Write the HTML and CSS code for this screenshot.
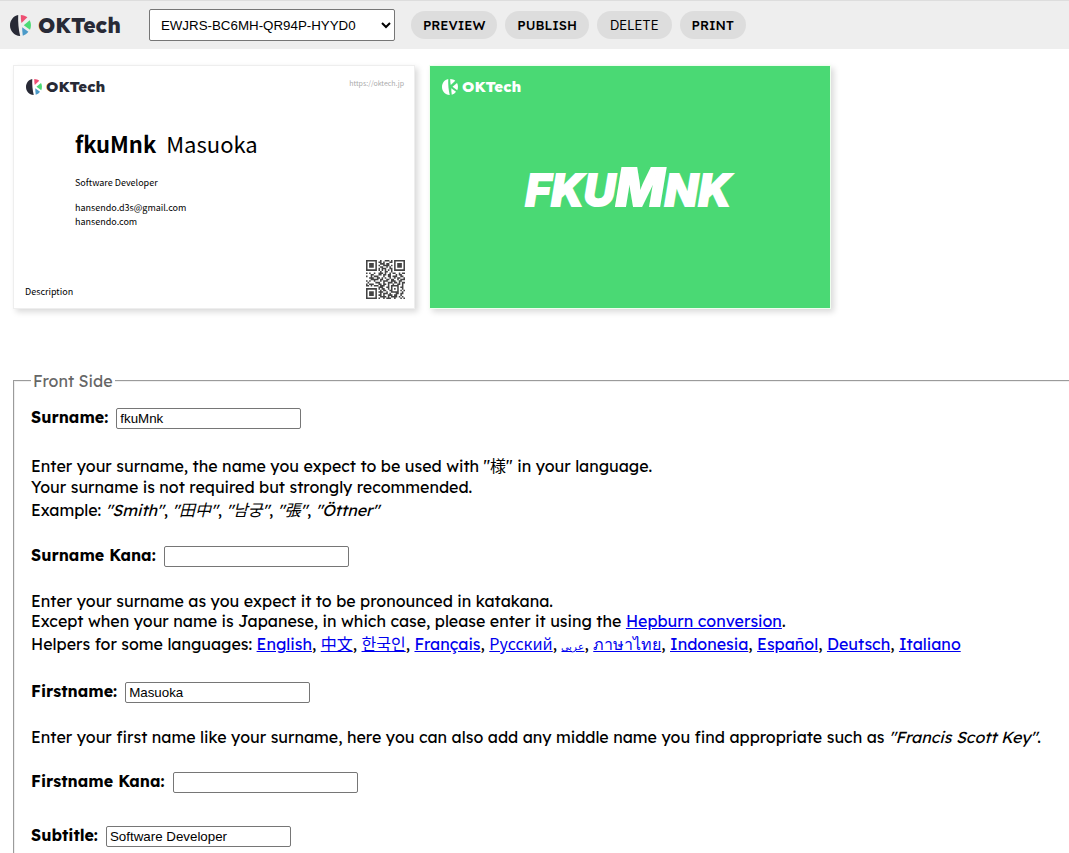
FILE: index.html
```
<!DOCTYPE html>
<html lang="en">
<head>
  <meta charset="UTF-8" />
  <meta name="viewport" content="width=device-width, initial-scale=1.0" />
  <title>OKTech Cards</title>
  <link rel="stylesheet" href="styles.css">
</head>

<body>
<!-- Logo mark, shared by the toolbar and both cards -->
<svg class="sprite" aria-hidden="true">
  <symbol id="mark" viewBox="0 0 64 64">
    <path class="mark-dark" d="M25 0C10 3 0 16 0 32s12 31 31 32C26 44 24 22 25 0z" />
    <path class="mark-pink" d="M33 0c8 0 15 3 20 7L35 24c-2-8-2-16-2-24z" />
    <path class="mark-green" d="M42 31L60 16c5 9 5 20 1 29z" />
    <path class="mark-blue" d="M37 37l19 14c-4 6-11 10-17 12-1-8-2-17-2-26z" />
  </symbol>
</svg>

<header class="toolbar">
  <a class="logo" href="#">
    <svg class="logo-mark" aria-hidden="true"><use href="#mark" /></svg>
    <span>OKTech</span>
  </a>
  <select class="card-select" aria-label="Card">
    <option>EWJRS-BC6MH-QR94P-HYYD0</option>
  </select>
  <div class="actions">
    <button type="button">PREVIEW</button>
    <button type="button">PUBLISH</button>
    <button type="button" class="light">DELETE</button>
    <button type="button">PRINT</button>
  </div>
</header>

<main>
  <!-- Card preview -->
  <section class="cards">
    <article class="card front">
      <div class="card-top">
        <div class="logo small">
          <svg class="logo-mark" aria-hidden="true"><use href="#mark" /></svg>
          <span>OKTech</span>
        </div>
        <span class="card-url">https://oktech.jp</span>
      </div>
      <div class="card-body">
        <h1 class="card-name"><b>fkuMnk</b> <span>Masuoka</span></h1>
        <p class="card-subtitle">Software Developer</p>
        <p>hansendo.d3s@gmail.com<br>hansendo.com</p>
      </div>
      <div class="card-bottom">
        <p>Description</p>
        <svg class="qr" viewBox="0 0 25 25" role="img" aria-label="QR code">
          <path d="M0 .5h7m2 0h1m2 0h3m1 0h1m1 0h7
            M0 1.5h1m5 0h1m1 0h2m1 0h1m3 0h2m1 0h1m5 0h1
            M0 2.5h1m1 0h3m1 0h1m2 0h3m1 0h2m3 0h1m1 0h3m1 0h1
            M0 3.5h1m1 0h3m1 0h1m1 0h1m2 0h4m1 0h1m1 0h1m1 0h3m1 0h1
            M0 4.5h1m1 0h3m1 0h1m2 0h2m2 0h1m1 0h1m2 0h1m1 0h3m1 0h1
            M0 5.5h1m5 0h1m1 0h1m1 0h3m2 0h2m1 0h1m5 0h1
            M0 6.5h7m1 0h1m1 0h1m1 0h1m1 0h1m1 0h1m1 0h7
            M9 7.5h1m2 0h2m2 0h1
            M0 8.5h1m1 0h1m2 0h1m2 0h3m1 0h1m2 0h1m1 0h2m2 0h1m1 0h2
            M3 9.5h2m3 0h2m1 0h2m1 0h2m3 0h1m1 0h2
            M0 10.5h1m2 0h1m1 0h3m3 0h1m2 0h2m1 0h3m2 0h2
            M2 11.5h3m2 0h2m1 0h1m1 0h1m2 0h1m2 0h1m1 0h2m2 0h1
            M3 12.5h5m1 0h2m2 0h2m1 0h2m2 0h1m1 0h3
            M0 13.5h1m1 0h1m2 0h1m3 0h1m1 0h3m2 0h3m2 0h2
            M1 14.5h1m4 0h3m2 0h1m2 0h3m1 0h2m1 0h1m1 0h2
            M0 15.5h1m1 0h3m3 0h2m1 0h2m1 0h1m2 0h1m2 0h2m1 0h1
            M0 16.5h2m1 0h1m1 0h3m1 0h3m2 0h1m1 0h5m2 0h1
            M8 17.5h3m2 0h2m1 0h1m3 0h1m1 0h2
            M0 18.5h7m1 0h1m1 0h2m2 0h1m1 0h1m1 0h1m1 0h1m2 0h1
            M0 19.5h1m5 0h1m2 0h1m1 0h2m2 0h2m3 0h1m1 0h1m1 0h1
            M0 20.5h1m1 0h3m1 0h1m1 0h3m2 0h1m2 0h5m2 0h1
            M0 21.5h1m1 0h3m1 0h1m2 0h1m1 0h3m1 0h1m3 0h2m1 0h2
            M0 22.5h1m1 0h3m1 0h1m1 0h2m1 0h1m2 0h3m1 0h2m2 0h1
            M0 23.5h1m5 0h1m2 0h4m1 0h1m1 0h4m1 0h1m1 0h1
            M0 24.5h7m1 0h1m2 0h1m1 0h3m2 0h1m3 0h1m1 0h1" />
        </svg>
      </div>
    </article>
    <article class="card back">
      <div class="card-top">
        <div class="logo small">
          <svg class="logo-mark" aria-hidden="true"><use href="#mark" /></svg>
          <span>OKTech</span>
        </div>
      </div>
      <div class="nickname"><span>fku<span class="capital">M</span>nk</span></div>
    </article>
  </section>

  <!-- Card editor -->
  <form>
    <fieldset>
      <legend>Front Side</legend>

      <div class="field">
        <label for="surname">Surname:</label>
        <input id="surname" type="text" value="fkuMnk" />
      </div>
      <p>
        Enter your surname, the name you expect to be used with "様" in your language.<br>
        Your surname is not required but strongly recommended.<br>
        Example: <i>"Smith"</i>, <i>"田中"</i>, <i>"남궁"</i>, <i>"張"</i>, <i>"Öttner"</i>
      </p>

      <div class="field">
        <label for="surname-kana">Surname Kana:</label>
        <input id="surname-kana" type="text" />
      </div>
      <p>
        Enter your surname as you expect it to be pronounced in katakana.<br>
        Except when your name is Japanese, in which case, please enter it using the <a href="#">Hepburn conversion</a>.<br>
        Helpers for some languages:
        <a href="#">English</a>,
        <a href="#">中文</a>,
        <a href="#">한국인</a>,
        <a href="#">Français</a>,
        <a href="#">Русский</a>,
        <a href="#" class="arabic" lang="ar">عربي</a>,
        <a href="#">ภาษาไทย</a>,
        <a href="#">Indonesia</a>,
        <a href="#">Español</a>,
        <a href="#">Deutsch</a>,
        <a href="#">Italiano</a>
      </p>

      <div class="field">
        <label for="firstname">Firstname:</label>
        <input id="firstname" type="text" value="Masuoka" />
      </div>
      <p>
        Enter your first name like your surname, here you can also add any middle name you find appropriate such as <i>"Francis Scott Key"</i>.
      </p>

      <div class="field no-help">
        <label for="firstname-kana">Firstname Kana:</label>
        <input id="firstname-kana" type="text" />
      </div>

      <div class="field">
        <label for="subtitle">Subtitle:</label>
        <input id="subtitle" type="text" value="Software Developer" />
      </div>
    </fieldset>
  </form>
</main>
</body>
</html>
```
FILE: styles.css
```
* {
  box-sizing: border-box;
}

body {
  margin: 0;
  color: #000000;
  background-color: #ffffff;
  font-family: Lexend, "Noto Sans CJK JP", sans-serif;
  font-size: 16px;
  overflow-x: hidden;
}

p {
  margin: 0;
}

.sprite {
  display: none;
}

/* Toolbar */
.toolbar {
  display: flex;
  align-items: center;
  height: 49px;
  padding: 0 10px;
  border-top: 1px solid #dddddd;
  background-color: #eeeeee;
}

.logo {
  display: flex;
  align-items: center;
  gap: 7px;
  color: #282a36;
  font-size: 21px;
  font-weight: 800;
  line-height: 22px;
  text-decoration: none;
}

.logo-mark {
  width: 21px;
  height: 21px;
}

.logo.small {
  gap: 4px;
  font-size: 15px;
  line-height: 18px;
}

.small .logo-mark {
  width: 16px;
  height: 16px;
}

.mark-dark {
  fill: #282a36;
}

.mark-pink {
  fill: #ee4f72;
}

.mark-green {
  fill: #4cda74;
}

.mark-blue {
  fill: #4b9ac8;
}

.card-select {
  width: 246px;
  height: 32px;
  margin-left: 28px;
  padding: 0 7px;
  border: 1px solid #767676;
  border-radius: 2px;
  background-color: #ffffff;
  color: #000000;
  font-family: "Liberation Sans", Arial, sans-serif;
}

.actions {
  display: flex;
  gap: 8px;
  margin-left: 16px;
}

.actions button {
  height: 28px;
  padding: 0 12px;
  border: none;
  border-radius: 14px;
  background-color: #dddddd;
  color: #000000;
  font-family: inherit;
  font-size: 13px;
  font-weight: 500;
  cursor: pointer;
}

.actions .light {
  padding: 0 13px;
  font-family: Inter, sans-serif;
  font-weight: 400;
}

/* Cards */
.cards {
  display: flex;
  flex-wrap: wrap;
  gap: 14px;
  padding: 16px 13px 62px;
}

.card {
  display: flex;
  flex-direction: column;
  width: 402px;
  aspect-ratio: 402 / 244;
  padding: 12px;
  border: 1px solid #eeeeee;
  box-shadow: 3px 3px 6px rgba(0, 0, 0, 0.15);
  font-family: "Noto Sans CJK JP", sans-serif;
  font-size: 9px;
  line-height: 14px;
}

.card-top {
  display: flex;
  justify-content: space-between;
}

.card .logo {
  font-family: Lexend, Inter, sans-serif;
}

.card-url {
  margin-right: -2px;
  color: #aaaaaa;
  font-size: 7px;
  line-height: 10px;
}

.card-body {
  padding: 29px 0 0 49px;
}

.card-name {
  display: flex;
  gap: 10px;
  margin: 0 0 15px;
  font-size: 22px;
  font-weight: 400;
  line-height: 36px;
}

.card-subtitle {
  margin-bottom: 11px;
}

.card-bottom {
  display: flex;
  justify-content: space-between;
  align-items: flex-end;
  margin: auto -3px -3px -1px;
}

.qr {
  width: 39px;
  height: 39px;
}

.qr path {
  stroke: #444444;
  stroke-width: 1;
}

.back {
  border-color: #eeffee;
  background-color: #4ad974;
}

.back .logo {
  color: #ffffff;
}

.back .logo-mark {
  filter: brightness(0) invert(1);
}

.nickname {
  display: flex;
  flex: 1;
  align-items: center;
  justify-content: center;
  padding: 0 4px 14px 0;
  color: #ffffff;
  font-family: "Permanent Marker", Inter, sans-serif;
  font-size: 44px;
  font-style: italic;
  font-weight: 800;
  line-height: 52px;
  text-transform: uppercase;
  -webkit-text-stroke: 2px #ffffff;
}

.nickname .capital {
  font-size: 52px;
}

/* Editor */
fieldset {
  margin: 0 -20px 0 13px;
  padding: 16px;
  border: 2px groove threedface;
}

legend {
  padding: 0 2px;
  color: #666666;
}

.field {
  display: flex;
  align-items: baseline;
  gap: 8px;
  height: 22px;
  margin-bottom: 24px;
}

.no-help {
  margin-bottom: 32px;
}

fieldset p {
  margin-bottom: 24px;
  white-space: nowrap;
}

label {
  font-weight: 700;
}

input {
  width: 185px;
  height: 21px;
  padding: 1px 3px;
  border: 1px solid #767676;
  border-radius: 2px;
  font-family: "Liberation Sans", Arial, sans-serif;
}

a {
  color: #0000ee;
}

.arabic {
  font-size: 10px;
}
```
